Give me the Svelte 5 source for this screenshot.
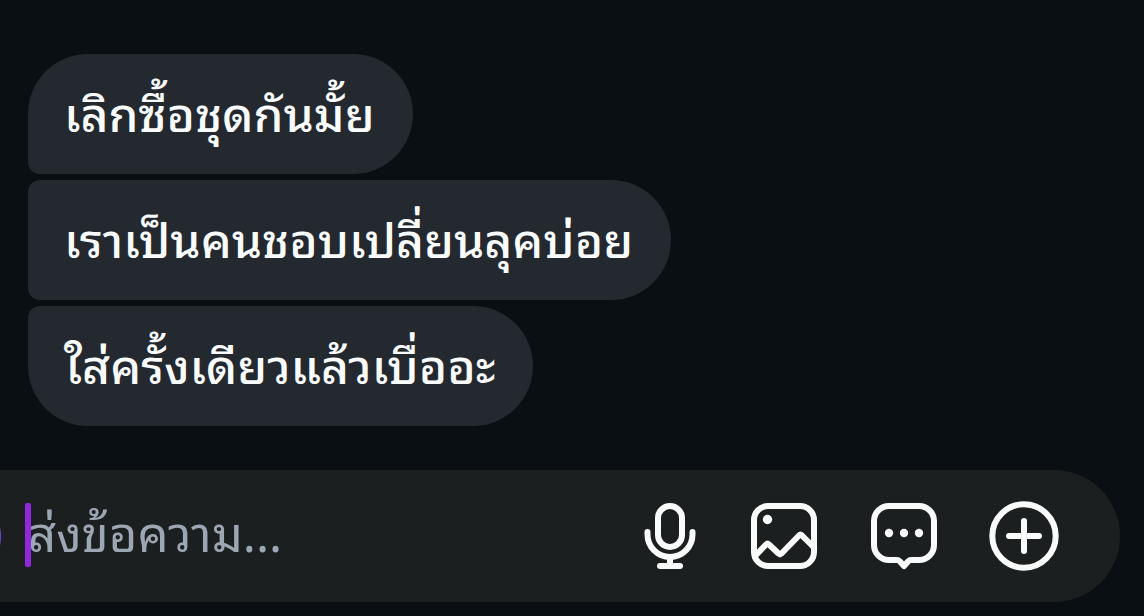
<script lang="ts">
    const messages = [
        "เลิกซื้อชุดกันมั้ย",
        "เราเป็นคนชอบเปลี่ยนลุคบ่อย",
        "ใส่ครั้งเดียวแล้วเบื่ออะ",
    ];

    let draft = $state("");
</script>

<main class="chat">
    <ul class="messages">
        {#each messages as message}
            <li class="bubble">{message}</li>
        {/each}
    </ul>

    <form class="composer" onsubmit={(event) => event.preventDefault()}>
        <button class="camera" type="button" aria-label="กล้อง"></button>

        <label class="field">
            <input
                type="text"
                placeholder="ส่งข้อความ..."
                aria-label="ส่งข้อความ"
                bind:value={draft}
            />
        </label>

        <div class="actions">
            <button class="action mic" type="button" aria-label="ข้อความเสียง">
                <svg viewBox="0 0 60 72">
                    <rect x="18" y="6" width="24" height="41" rx="12" />
                    <path d="M7.5 32v2.5a22.5 22.5 0 0 0 45 0V32" />
                    <path d="M30 57v9M20 66h20" />
                </svg>
            </button>
            <button class="action" type="button" aria-label="รูปภาพ">
                <svg viewBox="0 0 72 72">
                    <rect x="6" y="6" width="60" height="60" rx="14" />
                    <circle class="dot" cx="19.5" cy="19.5" r="4.7" />
                    <path d="M7 56L18 44.5q1.5-1.5 3 0L30.5 53.5q1.5 1.5 3 0L51 35.5q1.5-1.5 3 0L66 47.5" />
                </svg>
            </button>
            <button class="action" type="button" aria-label="สติกเกอร์">
                <svg viewBox="0 0 72 72">
                    <path d="M21 6h30a15 15 0 0 1 15 15v24a15 15 0 0 1-15 15h-8q-1.5 0-2.5 1L36 66l-4.5-5q-1-1-2.5-1h-8A15 15 0 0 1 6 45V21A15 15 0 0 1 21 6z" />
                    <circle class="dot" cx="21" cy="33" r="4.2" />
                    <circle class="dot" cx="36" cy="33" r="4.2" />
                    <circle class="dot" cx="51" cy="33" r="4.2" />
                </svg>
            </button>
            <button class="action" type="button" aria-label="เพิ่มเติม">
                <svg viewBox="0 0 72 72">
                    <circle cx="36" cy="36" r="31.7" />
                    <path d="M36 21v30M21 36h30" />
                </svg>
            </button>
        </div>
    </form>
</main>

<style>
    :global(body) {
        margin: 0;
        background: #0a0f13;
        overflow-x: hidden;
    }

    .chat {
        padding: 54px 24px 14px 0;
        overflow: hidden;
        font-family: "Noto Sans Thai Looped", "Loma", "Garuda", "Noto Sans", sans-serif;
        font-size: 49px;
        color: #f9fbfd;
    }

    .messages {
        display: flex;
        flex-direction: column;
        align-items: flex-start;
        gap: 6px;
        margin: 0 0 44px;
        padding: 0 0 0 28px;
        list-style: none;
    }

    .bubble {
        box-sizing: border-box;
        min-height: 120px;
        padding: 21px 38px 27px 36px;
        border-radius: 12px 60px 60px 12px;
        background: #23292f;
        font-size: 48px;
        font-weight: 500;
        line-height: 72px;
    }

    .bubble:first-child {
        border-top-left-radius: 60px;
    }

    .bubble:last-child {
        border-bottom-left-radius: 60px;
    }

    /* the left end of the bar runs off the edge of the screen */
    .composer {
        display: flex;
        align-items: center;
        height: 132px;
        margin-left: -100px;
        padding: 0 60px 0 12px;
        box-sizing: border-box;
        border-radius: 66px;
        background: #1c1f20;
    }

    .camera {
        flex: none;
        width: 89px;
        height: 89px;
        padding: 0;
        border: 0;
        border-radius: 50%;
        background: #6f45d8;
    }

    .field {
        position: relative;
        flex: 1;
        min-width: 0;
        margin-left: 24px;
    }

    .field::before {
        content: "";
        position: absolute;
        top: 0;
        left: 0;
        width: 6px;
        height: 64px;
        border-radius: 2px;
        background: #9128dd;
    }

    .field input {
        display: block;
        box-sizing: border-box;
        width: 100%;
        height: 66px;
        padding: 0 0 12px 3px;
        border: 0;
        outline: 0;
        background: transparent;
        color: inherit;
        font: inherit;
    }

    .field input::placeholder {
        color: #9da6b3;
        opacity: 1;
    }

    .actions {
        display: flex;
        flex: none;
        gap: 48px;
    }

    .action {
        width: 72px;
        height: 72px;
        padding: 0;
        border: 0;
        background: none;
        color: #f9fbfb;
    }

    .mic {
        width: 60px;
    }

    .action svg {
        display: block;
        width: 100%;
        height: 100%;
        fill: none;
        stroke: currentColor;
        stroke-width: 6;
        stroke-linecap: round;
        stroke-linejoin: round;
    }

    .action .dot {
        fill: currentColor;
        stroke: none;
    }
</style>
